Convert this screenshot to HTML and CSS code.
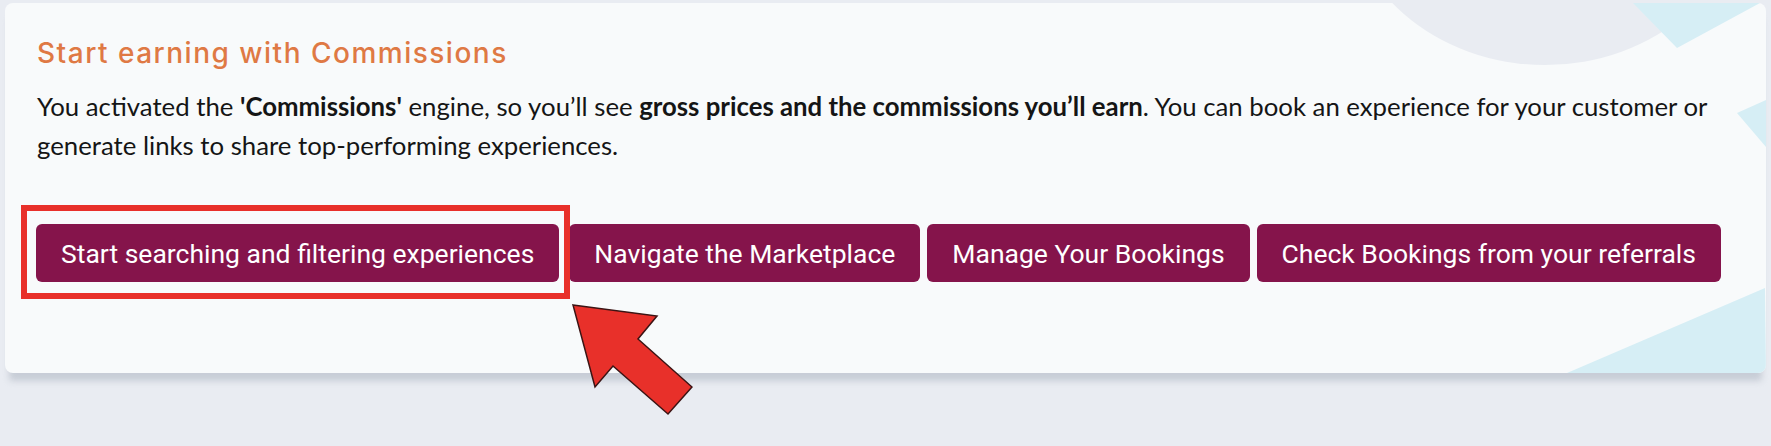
FILE: index.html
```html
<!DOCTYPE html>
<html lang="en">
<head>
    <meta charset="UTF-8">
    <meta name="viewport" content="width=device-width, initial-scale=1.0">
    <title>Start earning with Commissions</title>
    <link rel="stylesheet" href="styles.css">
</head>
<body>

    <div class="promo-card">
        <!-- background art -->
        <svg class="card-art" viewBox="0 0 1761 370" preserveAspectRatio="none">
            <ellipse cx="1540" cy="-113" rx="200" ry="175" fill="#e9ecf2"/>
            <polygon points="1628,0 1755,0 1672,45" fill="#d6eef5"/>
            <polygon points="1732,110 1761,97 1761,144" fill="#d6eef5"/>
            <polygon points="1562,370 1760,285 1761,370" fill="#d6eef5"/>
        </svg>

        <div class="promo-content">
            <h2 class="promo-title">Start earning with Commissions</h2>
            <p class="promo-text">You activated the <b>'Commissions'</b> engine, so you’ll see <b>gross prices and the commissions you’ll earn</b>. You can book an experience for your customer or generate links to share top-performing experiences.</p>

            <div class="promo-actions">
                <span class="highlight">
                    <button class="promo-btn">Start searching and filtering experiences</button>
                </span>
                <button class="promo-btn">Navigate the Marketplace</button>
                <button class="promo-btn">Manage Your Bookings</button>
                <button class="promo-btn">Check Bookings from your referrals</button>
            </div>
        </div>

        <!-- pointer arrow -->
        <svg class="pointer-arrow" width="130" height="120" viewBox="563 300 130 120">
            <polygon points="573,305 657,316 638,339 692,387 668,414 613,366 595,387" fill="#e8302a" stroke="#3b1414" stroke-width="1.5"/>
        </svg>
    </div>

</body>
</html>
```

FILE: styles.css
```css
html, body {
    min-height: 100vh;
}

body {
    margin: 0;
    background: #e9ecf2;
    font-family: 'Lato', sans-serif;
}

.promo-card {
    position: relative;
    margin: 3px 5px 0 5px;
    height: 370px;
    box-sizing: border-box;
    background: #f8fafb;
    border-radius: 8px;
    box-shadow: 0 12px 6px -4px rgba(160, 168, 182, 0.45);
}

.card-art {
    position: absolute;
    top: 0;
    left: 0;
    width: 100%;
    height: 100%;
    border-radius: 8px;
}

.promo-content {
    position: relative;
    padding: 33px 31px 0 31px;
}

.promo-title {
    margin: 0 0 0 1px;
    font-family: 'Inter', sans-serif;
    font-weight: 500;
    font-size: 28px;
    line-height: 34px;
    letter-spacing: 1.5px;
    color: #df7944;
}

.promo-text {
    margin: 17px 0 0 1px;
    font-size: 25.75px;
    line-height: 39px;
    color: #151515;
    max-width: 1700px;
}

.promo-text b {
    font-weight: 700;
}

.promo-actions {
    display: flex;
    gap: 7px;
    margin-top: 59px;
}

.highlight {
    position: relative;
    margin-right: 3px;
    display: flex;
}

.highlight::after {
    content: '';
    position: absolute;
    left: -15px;
    right: -11px;
    top: -19px;
    bottom: -17px;
    border: 6px solid #e8302a;
    pointer-events: none;
}

.promo-btn {
    height: 58px;
    padding: 0 25px;
    border: none;
    border-radius: 6px;
    background: #85144b;
    color: #fff;
    font-family: 'Roboto', sans-serif;
    font-size: 26.5px;
    cursor: pointer;
}

.pointer-arrow {
    position: absolute;
    left: 558px;
    top: 297px;
}
```
